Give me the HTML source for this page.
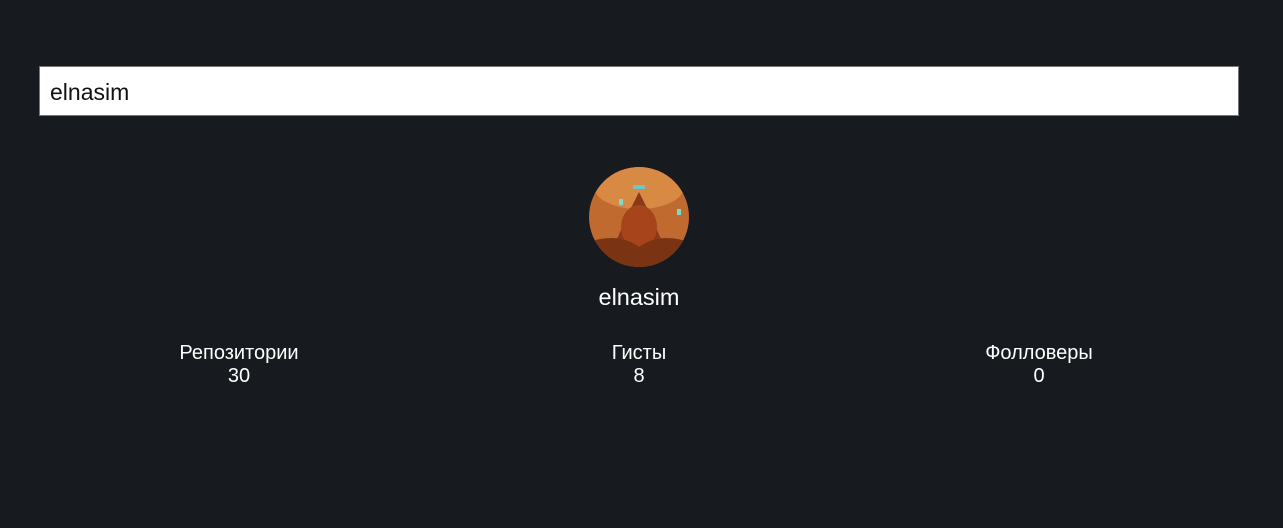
<!DOCTYPE html>
<html><head><meta charset="utf-8"><style>
body{margin:0;width:1283px;height:528px;background:#171b1f;font-family:"Liberation Sans",sans-serif;color:#fff;position:relative;overflow:hidden}
.inp{position:absolute;left:39px;top:66px;width:1188px;height:48px;background:#fff;border:1px solid #767676;color:#111;font-size:23px;line-height:50px;padding-left:10px;box-sizing:content-box}
.av{position:absolute;left:589px;top:167px;width:100px;height:100px;border-radius:50%;overflow:hidden}
.name{position:absolute;left:0;width:1278px;text-align:center;top:284px;font-size:23.5px}
.st{position:absolute;top:342px;width:300px;text-align:center;font-size:20px;line-height:23px}
</style></head><body>
<div class="inp">elnasim</div>
<div class="av"><svg width="100" height="100"><rect x="0" y="0" width="100" height="100" fill="#c06a30"/><ellipse cx="50" cy="20" rx="45" ry="22" fill="#d88a45"/><path d="M20 90 L40 45 L50 25 L60 45 L80 90Z" fill="#8c3818"/><ellipse cx="50" cy="60" rx="18" ry="22" fill="#a8441c"/><rect x="30" y="32" width="4" height="6" fill="#7fd8d0"/><rect x="88" y="42" width="4" height="6" fill="#7fd8d0"/><rect x="44" y="18" width="12" height="4" fill="#6bc8c0"/><path d="M0 75 Q30 65 50 80 Q70 65 100 75 L100 100 L0 100Z" fill="#7a3414"/></svg></div>
<div class="name">elnasim</div>
<div class="st" style="left:89px">Репозитории<br>30</div>
<div class="st" style="left:489px">Гисты<br>8</div>
<div class="st" style="left:889px">Фолловеры<br>0</div>
</body></html>
